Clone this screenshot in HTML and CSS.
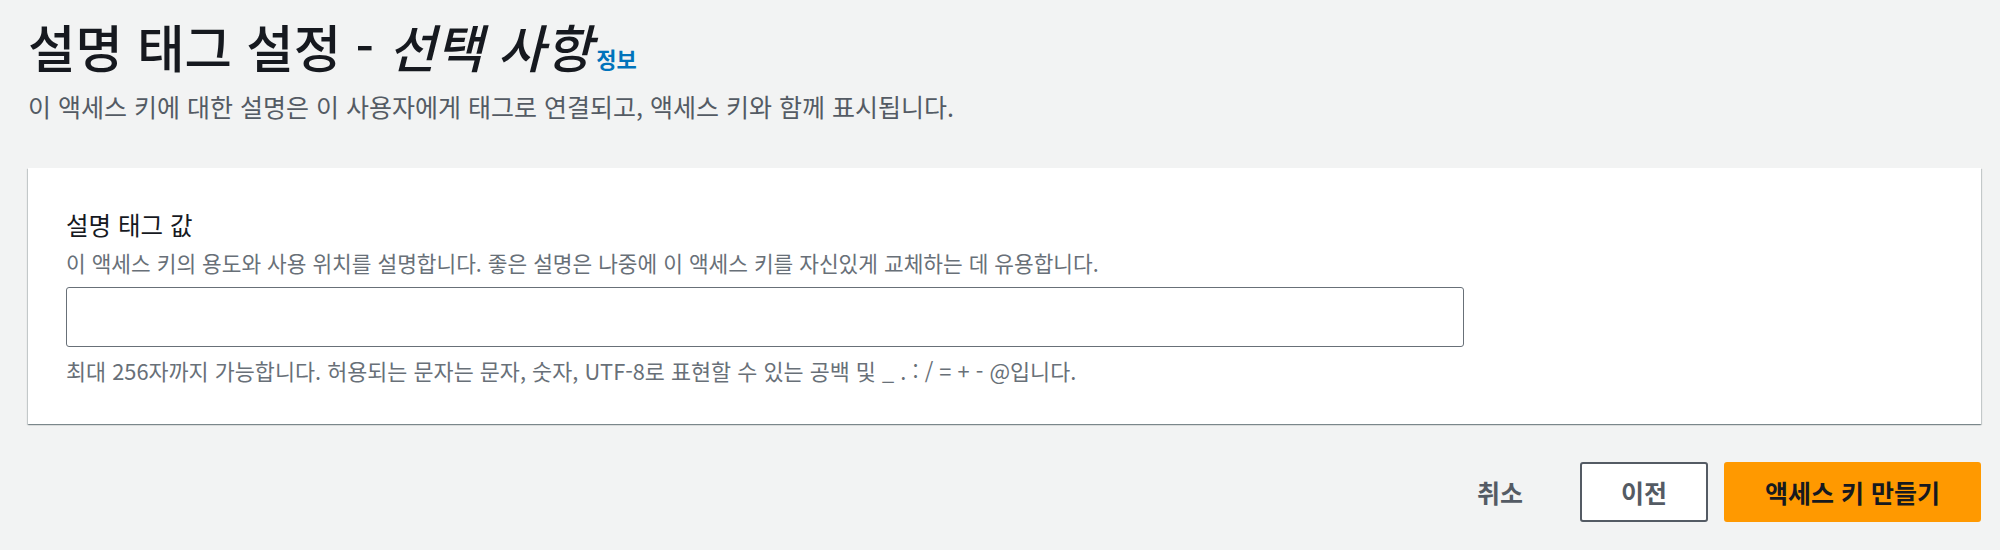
FILE: index.html
```html
<!DOCTYPE html>
<html lang="ko">
<head>
<meta charset="utf-8">
<title>설명 태그 설정</title>
<link rel="stylesheet" href="styles.css">
</head>
<body>
<div class="page">
  <header class="header">
    <h1 class="title">설명 태그 설정 - <em>선택 사항</em><a class="info" href="#">정보</a></h1>
    <p class="subtitle">이 액세스 키에 대한 설명은 이 사용자에게 태그로 연결되고, 액세스 키와 함께 표시됩니다.</p>
  </header>
  <section class="card">
    <label class="label" for="desc">설명 태그 값</label>
    <p class="desc">이 액세스 키의 용도와 사용 위치를 설명합니다. 좋은 설명은 나중에 이 액세스 키를 자신있게 교체하는 데 유용합니다.</p>
    <input class="input" id="desc" type="text">
    <p class="constraint">최대 256자까지 가능합니다. 허용되는 문자는 문자, 숫자, UTF-8로 표현할 수 있는 공백 및 _ . : / = + - @입니다.</p>
  </section>
  <div class="actions">
    <button class="btn btn-link">취소</button>
    <button class="btn btn-normal">이전</button>
    <button class="btn btn-primary">액세스 키 만들기</button>
  </div>
</div>
</body>
</html>
```

FILE: styles.css
```css
html, body {
  margin: 0;
  padding: 0;
  background: #f2f3f3;
}
body {
  font-family: "Noto Sans CJK KR", "Noto Sans", sans-serif;
  color: #16191f;
}
.page {
  padding: 16px 19px 0 28px;
}
.header {
  display: flex;
  flex-direction: column;
}
.title {
  margin: 0;
  font-size: 51.5px;
  line-height: 60px;
  font-weight: 500;
  color: #16191f;
  white-space: nowrap;
}
.title em {
  font-style: italic;
}
.info {
  font-size: 22px;
  line-height: 1;
  font-weight: 700;
  color: #0073bb;
  text-decoration: none;
  margin-left: 4px;
}
.subtitle {
  margin: 14px 0 0;
  font-size: 25px;
  line-height: 32px;
  color: #545b64;
}
.card {
  margin-top: 46px;
  background: #fff;
  padding: 41px 38px 39px;
  display: flex;
  flex-direction: column;
  align-items: flex-start;
  box-shadow: 0 1px 1px 0 rgba(0, 28, 36, 0.3), 1px 1px 1px 0 rgba(0, 28, 36, 0.15), -1px 1px 1px 0 rgba(0, 28, 36, 0.15);
}
.label {
  font-size: 24.5px;
  line-height: 32px;
  font-weight: 400;
  color: #16191f;
}
.desc {
  margin: 8px 0 0;
  font-size: 21.4px;
  line-height: 28px;
  color: #687078;
}
.input {
  box-sizing: border-box;
  margin-top: 10px;
  width: 1398px;
  height: 60px;
  border: 1.5px solid #687078;
  border-radius: 3px;
  background: #fff;
  font: inherit;
  font-size: 24px;
  padding: 0 14px;
}
.constraint {
  margin: 10px 0 0;
  font-size: 21.8px;
  line-height: 28px;
  color: #687078;
}
.actions {
  margin-top: 38px;
  display: flex;
  justify-content: flex-end;
  gap: 16px;
}
.btn {
  box-sizing: border-box;
  height: 60px;
  padding: 0 39px;
  font-family: inherit;
  font-size: 25px;
  font-weight: 700;
  border-radius: 3px;
  border: 2px solid transparent;
  background: transparent;
  color: #545b64;
  white-space: nowrap;
}
.btn-normal {
  background: #fff;
  border-color: #545b64;
}
.btn-primary {
  background: #ff9900;
  border-color: #ff9900;
  color: #16191f;
}
```
